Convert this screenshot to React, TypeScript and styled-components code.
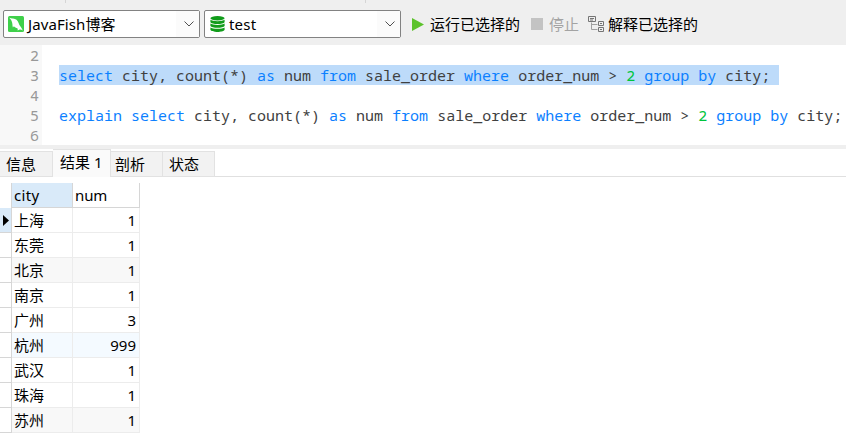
import { ReactNode } from "react"
import styled, { createGlobalStyle } from "styled-components"

const GlobalStyle = createGlobalStyle`
  body {
    margin: 0;
    background: #fff;
    color: #000;
    font: 15px/20px "Noto Sans", "Noto Sans CJK SC", sans-serif;
    overflow: hidden;
  }
`

const Window = styled.div`
  width: 846px;
  height: 443px;
  overflow: hidden;
`

const Toolbar = styled.div`
  height: 45px;
  background: #efefef;
`

const Ticks = styled.div`
  display: flex;
  gap: 299px;
  height: 3px;
  padding-left: 65px;
`

const Tick = styled.span`
  width: 1px;
  background: #d5d5d5;
`

const ToolbarItems = styled.div`
  display: flex;
  align-items: center;
  height: 28px;
  padding: 7px 0 0 3px;
`

const Combo = styled.div`
  box-sizing: border-box;
  display: flex;
  flex: none;
  align-items: center;
  width: 197px;
  height: 28px;
  margin-right: 4px;
  padding-left: 4px;
  border: 1px solid #828282;
  border-radius: 2px;
  background: #fff;
`

const ComboText = styled.span<{ $spacing: number }>`
  flex: 1;
  margin-left: 4px;
  letter-spacing: ${({ $spacing }) => $spacing}px;
  white-space: nowrap;
`

const ComboArrow = styled.span`
  box-sizing: border-box;
  display: flex;
  align-items: center;
  justify-content: center;
  width: 23px;
  height: 26px;
  padding-left: 3px;
  background: #fbfbfb;
`

const Actions = styled.div`
  display: flex;
  align-items: center;
  padding-left: 7px;
`

const Action = styled.div<{ $gap: number; $after?: number; $disabled?: boolean }>`
  display: flex;
  align-items: center;
  gap: ${({ $gap }) => $gap}px;
  margin-right: ${({ $after = 0 }) => $after}px;
  color: ${({ $disabled }) => ($disabled ? "#a3a3a3" : "#000")};
  white-space: nowrap;
`

const StopSquare = styled.span`
  width: 12px;
  height: 12px;
  background: #c3c3c3;
`

const Editor = styled.div`
  height: 100px;
  overflow: hidden;
  border-bottom: 4px solid #efefef;
  font: 15px/20px "Noto Sans Mono", "DejaVu Sans Mono", monospace;
`

const Line = styled.div`
  display: flex;
  height: 20px;
`

const LineNumber = styled.span`
  box-sizing: border-box;
  flex: none;
  width: 42px;
  padding-right: 3px;
  background: #f8f8f8;
  color: #999;
  text-align: right;
`

const Code = styled.code<{ $selected?: boolean }>`
  flex: none;
  margin-left: 17px;
  padding-right: 9px;
  background: ${({ $selected }) => ($selected ? "#bddbfa" : "none")};
  color: #404040;
  font-family: inherit;
  font-size: 15px;
  white-space: pre;
`

const Keyword = styled.span`
  color: #0b80ff;
`

const NumberLiteral = styled.span`
  color: #00c43c;
`

const TabBar = styled.div`
  display: flex;
  align-items: flex-end;
  height: 28px;
`

const Tab = styled.div<{ $active?: boolean; $width: number; $indent: number }>`
  box-sizing: border-box;
  width: ${({ $width }) => $width}px;
  height: ${({ $active }) => ($active ? 28 : 26)}px;
  padding: 2px 0 0 ${({ $indent }) => $indent}px;
  border: solid #e2e2e2;
  border-width: 1px 1px ${({ $active }) => ($active ? 0 : 1)}px 0;
  background: ${({ $active }) => ($active ? "#fafafa" : "#f2f2f2")};
  white-space: nowrap;
`

const TabRest = styled.div`
  flex: 1;
  border-bottom: 1px solid #e0e0e0;
`

const Grid = styled.div`
  padding-top: 6px;
`

const Row = styled.div<{ $background?: string }>`
  display: grid;
  grid-template-columns: 12px 61px 67px;
  width: 140px;
  height: 25px;
  background: ${({ $background = "#fff" }) => $background};
`

const Marker = styled.div<{ $current?: boolean; $header?: boolean }>`
  box-sizing: border-box;
  display: flex;
  align-items: center;
  padding-left: 3px;
  border: solid #d6d6d6;
  border-width: 0 1px ${({ $header }) => ($header ? 0 : 1)}px 0;
  background: ${({ $current }) => ($current ? "#d9eaf9" : "#fff")};
`

const HeaderCell = styled.div<{ $active?: boolean }>`
  box-sizing: border-box;
  padding: 2px 0 0 2px;
  border: solid #d6d6d6;
  border-width: 0 1px 1px 0;
  background: ${({ $active }) => ($active ? "#d9eaf9" : "#fff")};
  letter-spacing: ${({ $active }) => ($active ? 0.3 : -0.1)}px;
`

const Cell = styled.div<{ $numeric?: boolean }>`
  box-sizing: border-box;
  padding: 2px 3px 0 2px;
  border: solid #ececec;
  border-width: 0 1px 1px 0;
  text-align: ${({ $numeric }) => ($numeric ? "right" : "left")};
`

const rows = [
  { city: "上海", num: 1 },
  { city: "东莞", num: 1 },
  { city: "北京", num: 1, background: "#f8f8f8" },
  { city: "南京", num: 1 },
  { city: "广州", num: 3 },
  { city: "杭州", num: 999, background: "#f4faff" },
  { city: "武汉", num: 1 },
  { city: "珠海", num: 1 },
  { city: "苏州", num: 1, background: "#f8f8f8" },
]

const DolphinIcon = () => (
  <svg width="16" height="16" viewBox="0 0 16 16">
    <rect width="16" height="16" rx="1.5" fill="#3fd04a" />
    <path
      d="M1.2 1.8C2.600 1.800 3.600 2.600 5 2.600C7.800 2.800 9.800 4.400 10.600 7C11 8.600 11.800 9.600 12.500 10.600C13.300 11.800 14 13 14.800 14.400C13.400 13.500 12.400 13.300 11.200 13.700L9.600 14.600C9.800 13.600 9.800 13 9.400 12.300C8 12 6.800 11.200 5.900 10.200L4.900 11.400C4.400 10.300 4.500 9.200 4.400 8C4.200 5.600 3 3.500 1.200 1.800z"
      fill="#fff"
    />
  </svg>
)

const DatabaseIcon = () => (
  <svg width="16" height="16" viewBox="0 0 16 16">
    <g fill="#119c1b">
      <ellipse cx="8.500" cy="2.300" rx="7.100" ry="2.200" />
      <path d="M1.400 3.700c2 1.900 12.200 1.900 14.200 0v2.500c-1 2.400-13.200 2.400-14.200 0z" />
      <path d="M1.400 7.600c2 1.900 12.200 1.900 14.200 0v2.300c-1 2.400-13.200 2.400-14.200 0z" />
      <path d="M1.400 11.400c2 1.900 12.200 1.900 14.200 0v2.300c-1 2.900-13.200 2.900-14.200 0z" />
    </g>
  </svg>
)

const PlayIcon = () => (
  <svg width="12" height="13" viewBox="0 0 12 13">
    <path d="M0 0L12 6.500L0 13z" fill="#5cc22c" />
  </svg>
)

const ExplainIcon = () => (
  <svg width="16" height="16" viewBox="0 0 16 16" fill="none" stroke="#757575">
    <path d="M3.500 6.500v7h6M3.500 8.500h6" stroke="#a0a0a0" />
    <path d="M.5.5h7v5h-7zM10.500 5.500h5v4h-5zM10.500 11.500h5v4h-5z" />
    <path d="M2 2.500h4M2 4h3M12 7.500h2M12 13.500h2" />
  </svg>
)

const ChevronIcon = () => (
  <svg width="10" height="6" viewBox="0 0 10 6" fill="none" stroke="#505050">
    <path d="M.5.5L5 5L9.500.5" />
  </svg>
)

const MarkerIcon = () => (
  <svg width="6" height="11" viewBox="0 0 6 11">
    <path d="M0 0L6 5.500L0 11z" fill="#000" />
  </svg>
)

type ComboBoxProps = {
  icon: ReactNode
  label: string
  spacing?: number
}

const ComboBox = ({ icon, label, spacing = 0 }: ComboBoxProps) => (
  <Combo>
    {icon}
    <ComboText $spacing={spacing}>{label}</ComboText>
    <ComboArrow>
      <ChevronIcon />
    </ComboArrow>
  </Combo>
)

const Query = () => (
  <>
    <Keyword>select</Keyword> city, count(*) <Keyword>as</Keyword> num <Keyword>from</Keyword>{" "}
    sale_order <Keyword>where</Keyword> order_num &gt; <NumberLiteral>2</NumberLiteral>{" "}
    <Keyword>group</Keyword> <Keyword>by</Keyword> city;
  </>
)

const App = () => (
  <Window>
    <GlobalStyle />
    <Toolbar>
      <Ticks>
        <Tick />
        <Tick />
      </Ticks>
      <ToolbarItems>
        <ComboBox icon={<DolphinIcon />} label="JavaFish博客" spacing={0.1} />
        <ComboBox icon={<DatabaseIcon />} label="test" spacing={0.2} />
        <Actions>
          <Action $gap={6} $after={11}>
            <PlayIcon />
            运行已选择的
          </Action>
          <Action $gap={6} $after={9} $disabled>
            <StopSquare />
            停止
          </Action>
          <Action $gap={4}>
            <ExplainIcon />
            解释已选择的
          </Action>
        </Actions>
      </ToolbarItems>
    </Toolbar>
    <Editor>
      <Line>
        <LineNumber>2</LineNumber>
      </Line>
      <Line>
        <LineNumber>3</LineNumber>
        <Code $selected>
          <Query />
        </Code>
      </Line>
      <Line>
        <LineNumber>4</LineNumber>
      </Line>
      <Line>
        <LineNumber>5</LineNumber>
        <Code>
          <Keyword>explain</Keyword> <Query />
        </Code>
      </Line>
      <Line>
        <LineNumber>6</LineNumber>
      </Line>
    </Editor>
    <TabBar>
      <Tab $width={53} $indent={6}>
        信息
      </Tab>
      <Tab $width={58} $indent={7} $active>
        结果 1
      </Tab>
      <Tab $width={52} $indent={4}>
        剖析
      </Tab>
      <Tab $width={52} $indent={6}>
        状态
      </Tab>
      <TabRest />
    </TabBar>
    <Grid>
      <Row>
        <Marker $header />
        <HeaderCell $active>city</HeaderCell>
        <HeaderCell>num</HeaderCell>
      </Row>
      {rows.map(({ city, num, background }, index) => (
        <Row key={city} $background={background}>
          <Marker $current={index === 0}>{index === 0 && <MarkerIcon />}</Marker>
          <Cell>{city}</Cell>
          <Cell $numeric>{num}</Cell>
        </Row>
      ))}
    </Grid>
  </Window>
)

export default App
